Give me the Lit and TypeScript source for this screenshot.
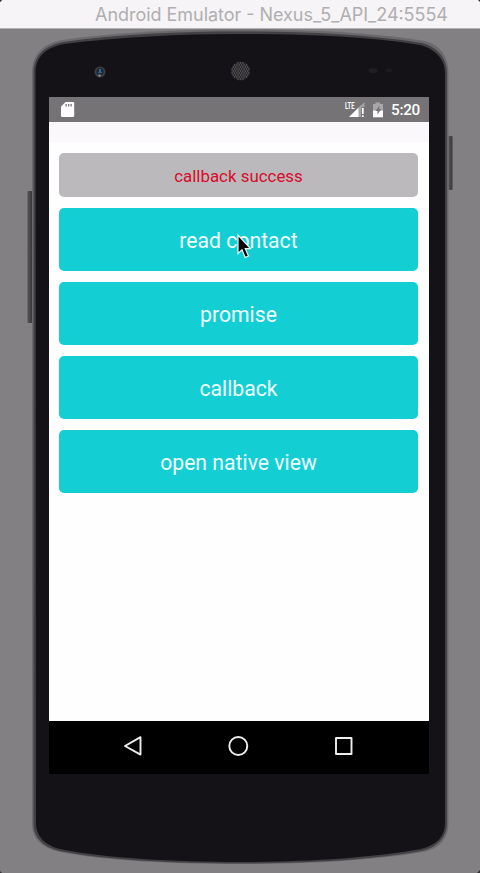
import { LitElement, html, css, svg } from "lit";
import { customElement } from "lit/decorators.js";

const actions = ["read contact", "promise", "callback", "open native view"];

const mesh: Array<[number, number]> = [];
for (let y = -8; y <= 8; y += 2) {
  const shift = (y / 2) % 2 === 0 ? 0 : 1.2;
  for (let x = -9.6; x <= 9.6; x += 2.4) {
    if (Math.hypot(x + shift, y) < 8.8) mesh.push([x + shift, y]);
  }
}

@customElement("status-icons")
class StatusIcons extends LitElement {
  static styles = css`
    :host { display: block; }
    svg { display: block; }
    text { font: bold 9.5px "Roboto", sans-serif; }
  `;
  render() {
    return html`<svg width="42" height="24" viewBox="344 97 42 24">
      <text transform="translate(345 108) scale(0.62 1)" fill="#fff">LTE</text>
      <path d="M358 107.500 364.500 101v5h-3v2z" fill="#a5a3a5" />
      <path d="M349 116l9-9h2.500v9z" fill="#fff" />
      <path d="M358.500 106.500l2.500-2.500v12h-2.500z" fill="#a5a3a5" />
      <path d="M361.900 107h1.800v6h-1.800zM361.900 114.200h1.800v1.800h-1.800z" fill="#fff" />
      <path d="M373 103h2.500v-1.500h4.500v1.500h3v6.500h-10z" fill="#a9a8a9" />
      <path d="M373 109.500h10v6.800h-10z" fill="#fff" />
      <path d="M379.300 104.500l-3.800 5.500h2v3.500l3.800-5.500h-2z" fill="#777577" />
    </svg>`;
  }
}

@customElement("app-root")
class AppRoot extends LitElement {
  static styles = css`
    :host {
      display: flex;
      flex-direction: column;
      position: relative;
      width: 480px;
      height: 873px;
      overflow: hidden;
      background: #828082;
      font-family: "Roboto", sans-serif;
    }
    .title {
      flex: none;
      box-sizing: border-box;
      height: 29px;
      padding-left: 95px;
      background: #f6f4f6;
      border-bottom: 1px solid #b5b3b5;
      font: 18px/29px "Inter", sans-serif;
      white-space: nowrap;
    }
    .title svg { display: block; overflow: visible; }
    .body, .pointer { position: absolute; left: 0; top: 0; }
    .pointer { left: 236px; top: 233px; }
    .screen {
      position: relative;
      display: flex;
      flex-direction: column;
      width: 380px;
      height: 677px;
      margin: 68px 0 0 49px;
      background: #fffeff;
    }
    .status {
      flex: none;
      display: flex;
      align-items: center;
      box-sizing: border-box;
      height: 25px;
      padding: 0 8px 0 12px;
      background: #757375;
      color: #fff;
    }
    .status svg { display: block; }
    .grow { flex: 1; }
    .time {
      width: 30px;
      margin-left: 5px;
      padding-top: 1px;
      font-size: 15.3px;
      font-weight: 500;
      line-height: 24px;
      letter-spacing: -0.3px;
    }
    .header { flex: none; height: 20px; background: #faf8fb; }
    .content {
      flex: 1;
      display: flex;
      flex-direction: column;
      gap: 11px;
      padding: 11px 11px 0 10px;
    }
    .message, button {
      display: flex;
      align-items: center;
      justify-content: center;
      box-sizing: border-box;
      border: 0;
      border-radius: 5px;
      font-family: inherit;
    }
    .message { height: 44px; padding-top: 1px; background: #bbb9bb; color: #d80b2c; font-size: 16.900px; }
    button { height: 63px; padding: 2px 0 0; background: #13ced3; color: #f0ffff; font-size: 21.200px; }
    .nav {
      flex: none;
      display: flex;
      justify-content: center;
      height: 53px;
      background: #000;
    }
  `;

  render() {
    return html`
      <div class="title">
        <svg width="354" height="28"><text y="21" fill="#b0aeb0" textLength="353">Android Emulator - Nexus_5_API_24:5554</text></svg>
      </div>
      <svg class="body" width="480" height="873">
        <defs>
          <linearGradient id="side"><stop stop-color="#555355" /><stop offset="1" stop-color="#39373a" /></linearGradient>
        </defs>
        <path d="M0 0h2Q1 2 0 2zM478 0h2v2zM0 871l2 2H0zM480 870v3h-3z" fill="#333" />
        <rect x="27.500" y="191" width="5" height="132" rx="1" fill="url(#side)" />
        <rect x="448.500" y="136" width="4" height="54" rx="1" fill="url(#side)" />
        <path d="M32 73C32 55 42 44 62 40C118 32 178 29.500 240 29.500S370 32 425 41C440 45 448.500 56 448.500 73V823C448.500 838 440 848 424 852C370 861 305 864 240 864S105 861 60 852C42 848 32 839 32 824Z" fill="#6b696c" />
        <path d="M33.500 73C33.500 57 43 46 63 42C119 34 178 31.500 240 31.500S365 34 422 43C437 47 447 58 447 73V823C447 837 438 847 422 851C370 860 305 863.500 240 863.500S105 860 62 851.500C44 848 33.500 838 33.500 824Z" fill="#424043" />
        <path d="M35.500 73C35.500 58 44 48 64 44C120 37 178 34 240 34S365 36 420 45C435 49 445 59 445 73V823C445 836 437 845 421 849C370 858 305 862 240 862S105 858 62 849.500C46 846 36 837 36 823Z" fill="#141216" />
        <circle cx="100" cy="72" r="5.500" fill="#3c3d40" />
        <circle cx="100" cy="71.500" r="3.500" fill="#1b2733" />
        <path d="M99 69h2v2.500l1.500 1.500h-5l1.500-1.500z" fill="#2f6591" />
        <circle cx="99.500" cy="75.500" r="1.200" fill="#85898c" />
        <circle cx="240.500" cy="71" r="9.500" fill="#292729" />
        ${mesh.map(([x, y]) => svg`<circle cx=${240.5 + x} cy=${71 + y} r="0.7" fill="#636163" />`)}
        <ellipse cx="373" cy="70.500" rx="4.500" ry="2.500" fill="#201e21" />
        <ellipse cx="389" cy="70.500" rx="3.500" ry="2" fill="#1c1a1d" />
      </svg>
      <main class="screen">
        <div class="status">
          <svg width="14" height="17" viewBox="0 0 14 17">
            <path d="M4.500 1H12q1.200 0 1.200 1.200v12.600q0 1.200-1.200 1.200H1.200Q0 16 0 14.800V5.500z" fill="#fff" />
            <path d="M4.500 3h1.300v2.500H4.500zM7 3h1.300v2.500H7zM9.500 3h1.300v2.500H9.500z" fill="#757375" />
          </svg>
          <span class="grow"></span>
          <status-icons></status-icons>
          <span class="time">5:20</span>
        </div>
        <div class="header"></div>
        <div class="content">
          <div class="message">callback success</div>
          ${actions.map((label) => html`<button>${label}</button>`)}
        </div>
        <div class="nav">
          <svg width="380" height="53" viewBox="49 721 380 53" fill="none" stroke="#f0eff0" stroke-width="1.900" stroke-linejoin="round">
            <path d="M125 746l15.500-8.800v17.400z" />
            <circle cx="238.300" cy="746" r="9" />
            <rect x="336" y="738" width="15.500" height="16" />
          </svg>
        </div>
      </main>
      <svg class="pointer" width="17" height="29" viewBox="0 0 17 29">
        <path d="M2 2v18.500l4-3.800 3.200 7.800 3.300-1.500-3.200-7.300h5.200z" fill="#080808" stroke="#e9f7f8" stroke-width="1.200" />
      </svg>
    `;
  }
}
